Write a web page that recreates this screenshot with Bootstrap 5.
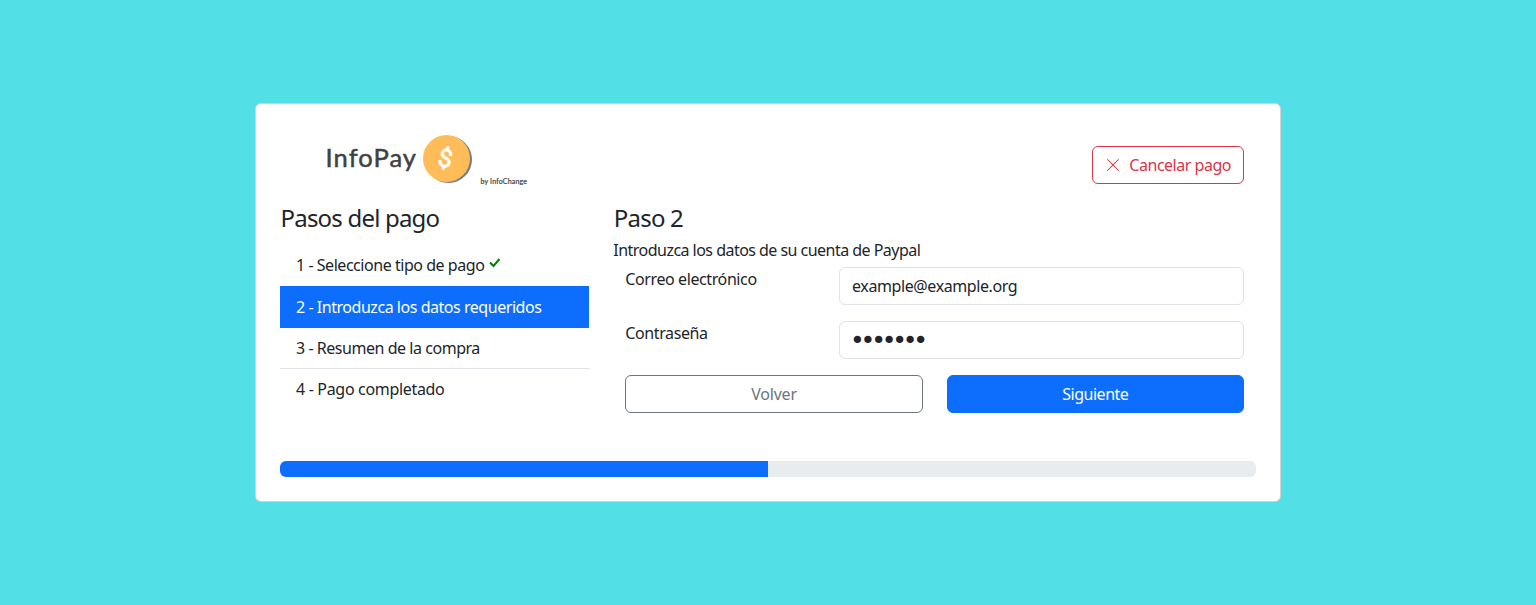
<!DOCTYPE html>
<html lang="es">
<head>
<meta charset="utf-8">
<meta name="viewport" content="width=device-width, initial-scale=1">
<title>InfoPay</title>
<link href="https://cdn.jsdelivr.net/npm/bootstrap@5.3.0/dist/css/bootstrap.min.css" rel="stylesheet">
<style>
body { background: #52dfe5; font-family: "Noto Sans", sans-serif; letter-spacing: -.46px; }
h4 { font-weight: 400; letter-spacing: -.8px; padding-left: .5px; }
.btn { letter-spacing: -.48px; }
.btn-outline-secondary { letter-spacing: -.2px; }
.pay-card { width: 1026px; height: 399px; }
.pay-head { height: 76px; }
.pay-logo { width: 309px; height: 76px; letter-spacing: 0; }
.pay-logo text { font-family: Lato, sans-serif; }
.pay-logo .coin-sign { font-family: Roboto, sans-serif; }
.pay-cancel { margin: 0 12px 2px 0; }
.pay-cancel svg { margin-right: 8px; }
.pay-progress { height: 16px; }
.steps { --bs-list-group-bg: transparent; margin-top: 12px; }
.steps .list-group-item:first-child { border-bottom: 0; padding-bottom: 10px; }
.steps svg { margin: 0 0 7px 1px; }
.steps .done-last { letter-spacing: -.32px; }
.step-text { margin-top: -3px; letter-spacing: -.53px; }
.pay-form { margin-top: 5px; }
.pay-form .field-col { padding-left: 11.5px; }
.pay-form label { letter-spacing: -.4px; }
.pay-form .form-control { height: 38px; letter-spacing: -.4px; }
.pay-form input[type="password"] { font-family: "DejaVu Sans", sans-serif; font-size: 25px; line-height: 24px; letter-spacing: -4.2px; padding: 7px 12px 5px 10px; }
</style>
</head>
<body>
<main class="vh-100 d-flex align-items-center justify-content-center">
  <div class="card pay-card">
    <div class="card-body p-4 d-flex flex-column">
      <header class="pay-head d-flex justify-content-between align-items-center">
        <svg class="pay-logo" viewBox="0 0 309 76" role="img" aria-label="InfoPay by InfoChange">
          <text x="45.500" y="39" font-size="25.500" fill="#3d4244" stroke="#3d4244" stroke-width=".5" textLength="90.500">InfoPay</text>
          <circle cx="168.500" cy="31.500" r="23.500" fill="#7c7c7c"/>
          <circle cx="166.500" cy="30.500" r="23.500" fill="#ffbd59"/>
          <text class="coin-sign" x="165.500" y="39" font-size="25" fill="#fff" stroke="#fff" stroke-width=".7" text-anchor="middle" transform="rotate(12 166 30)">$</text>
          <text x="200.500" y="56" font-size="7" fill="#3d4244" stroke="#3d4244" stroke-width=".2" textLength="46.500">by InfoChange</text>
        </svg>
        <button class="btn btn-outline-danger pay-cancel d-flex align-items-center" type="button"><svg width="16" height="16" viewBox="0 0 16 16" fill="currentColor" aria-hidden="true"><path d="M2.146 2.854a.5.5 0 1 1 .708-.708L8 7.293l5.146-5.147a.5.5 0 0 1 .708.708L8.707 8l5.147 5.146a.5.5 0 0 1-.708.708L8 8.707l-5.146 5.147a.5.5 0 0 1-.708-.708L7.293 8 2.146 2.854Z"/></svg>Cancelar pago</button>
      </header>
      <div class="row">
        <section class="col-4">
          <h4>Pasos del pago</h4>
          <ul class="list-group list-group-flush steps">
            <li class="list-group-item">1 - Seleccione tipo de pago <svg width="12" height="10" viewBox="0 0 12 10" fill="none" stroke="green" stroke-width="2" aria-label="Completado"><path d="M1 4.500 4.500 8 10.500 1"/></svg></li>
            <li class="list-group-item active">2 - Introduzca los datos requeridos</li>
            <li class="list-group-item">3 - Resumen de la compra</li>
            <li class="list-group-item done-last">4 - Pago completado</li>
          </ul>
        </section>
        <section class="col-8">
          <h4>Paso 2</h4>
          <div class="step-text">Introduzca los datos de su cuenta de Paypal</div>
          <form class="container pay-form">
            <div class="row mb-3">
              <label class="col-4" for="correo">Correo electrónico</label>
              <div class="col-8 field-col"><input id="correo" class="form-control" type="email" value="example@example.org"></div>
            </div>
            <div class="row mb-3">
              <label class="col-4" for="clave">Contraseña</label>
              <div class="col-8 field-col"><input id="clave" class="form-control" type="password" value="secreto"></div>
            </div>
            <div class="row">
              <div class="col-6"><button class="btn btn-outline-secondary w-100" type="button">Volver</button></div>
              <div class="col-6"><button class="btn btn-primary w-100" type="button">Siguiente</button></div>
            </div>
          </form>
        </section>
      </div>
      <div class="progress pay-progress mt-auto" role="progressbar" aria-valuenow="50" aria-valuemin="0" aria-valuemax="100">
        <div class="progress-bar" style="width: 50%"></div>
      </div>
    </div>
  </div>
</main>
<script src="https://cdn.jsdelivr.net/npm/bootstrap@5.3.0/dist/js/bootstrap.bundle.min.js"></script>
</body>
</html>
